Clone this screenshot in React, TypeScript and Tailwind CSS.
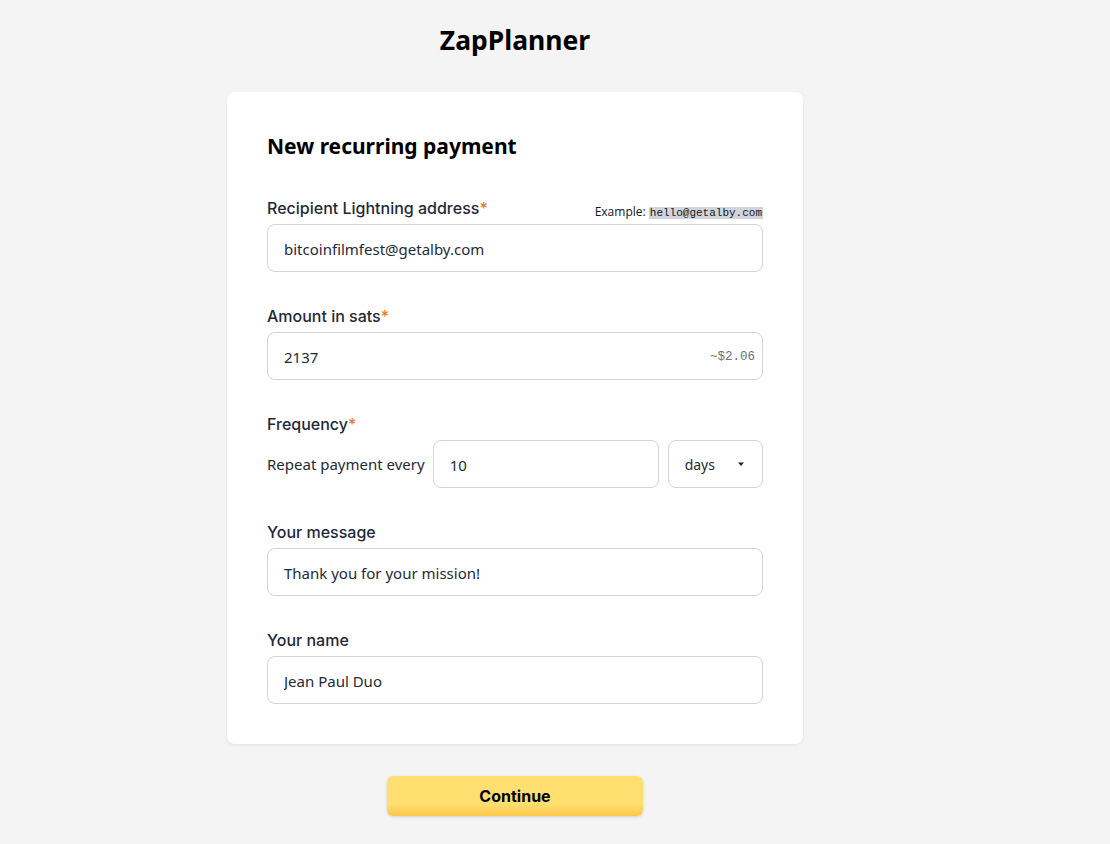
import { useState } from 'react'

const Label = ({
  children,
  required = false,
}: {
  children: React.ReactNode
  required?: boolean
}) => (
  <span className="font-['Inter'] text-[16px] font-medium leading-6 text-[#1f2937]">
    {children}
    {required && <span className="text-[#ea7a2a]">*</span>}
  </span>
)

const fieldClass =
  'h-12 rounded-lg border border-[#d4d4d8] bg-white px-4 pt-[2px] font-["Noto_Sans"] text-[15px] text-[#1f2937] outline-none'

export default function App() {
  const [address, setAddress] = useState('bitcoinfilmfest@getalby.com')
  const [amount, setAmount] = useState('2137')
  const [every, setEvery] = useState('10')
  const [message, setMessage] = useState('Thank you for your mission!')
  const [name, setName] = useState('Jean Paul Duo')

  return (
    <div className="flex min-h-[844px] flex-col items-center bg-[#f4f4f4] pb-7 pr-20">
      <h1 className="mt-[22px] font-['Noto_Sans'] text-[26.5px] font-bold leading-9 text-black">
        ZapPlanner
      </h1>

      <div className="mt-[34px] w-[576px] rounded-lg bg-white p-10 shadow-[0_1px_3px_rgba(0,0,0,0.08)]">
        <h2 className="font-['Noto_Sans'] text-[21px] font-bold leading-7 text-black">
          New recurring payment
        </h2>

        <div className="mt-9 flex flex-col gap-8">
          <div className="flex flex-col gap-1">
            <div className="flex items-end justify-between">
              <Label required>Recipient Lightning address</Label>
              <span className="-mb-[1px] font-['Open_Sans'] text-[12px] leading-4 text-[#111827]">
                Example:{' '}
                <code className="bg-[#d1d5db] px-[1px] font-['Liberation_Mono'] text-[11px]">
                  hello@getalby.com
                </code>
              </span>
            </div>
            <input
              className={`${fieldClass} w-full`}
              value={address}
              onChange={(e) => setAddress(e.target.value)}
            />
          </div>

          <div className="flex flex-col gap-1">
            <Label required>Amount in sats</Label>
            <div className="relative">
              <input
                className={`${fieldClass} w-full`}
                value={amount}
                onChange={(e) => setAmount(e.target.value)}
              />
              <span className="absolute right-2 top-1/2 -translate-y-1/2 pt-[2px] font-['Liberation_Mono'] text-[12.5px] text-[#66736f]">
                ~$2.06
              </span>
            </div>
          </div>

          <div className="flex flex-col gap-1">
            <Label required>Frequency</Label>
            <div className="flex items-center">
              <span className="mr-2 whitespace-nowrap font-['Noto_Sans'] text-[15px] text-[#1f2937]">
                Repeat payment every
              </span>
              <input
                className={`${fieldClass} w-[226px] min-w-0 flex-none`}
                value={every}
                onChange={(e) => setEvery(e.target.value)}
              />
              <div className="ml-[9px] flex h-12 min-w-0 flex-1 items-center justify-between rounded-lg border border-[#d4d4d8] bg-white pl-4 pr-[17px]">
                <span className="font-['Noto_Sans'] text-[14px] text-[#1f2937]">
                  days
                </span>
                <svg width="8" height="5" viewBox="0 0 8 5">
                  <path d="M1 0.5h6L4 4z" fill="#1f2937" />
                </svg>
              </div>
            </div>
          </div>

          <div className="flex flex-col gap-1">
            <Label>Your message</Label>
            <input
              className={`${fieldClass} w-full`}
              value={message}
              onChange={(e) => setMessage(e.target.value)}
            />
          </div>

          <div className="flex flex-col gap-1">
            <Label>Your name</Label>
            <input
              className={`${fieldClass} w-full`}
              value={name}
              onChange={(e) => setName(e.target.value)}
            />
          </div>
        </div>
      </div>

      <button className="mt-8 h-10 w-[256px] rounded-md bg-gradient-to-b from-[#ffdf6f] from-70% to-[#fcc64a] font-['Inter'] text-[16px] font-bold text-black shadow-[0_1px_3px_rgba(0,0,0,0.15)]">
        Continue
      </button>
    </div>
  )
}
